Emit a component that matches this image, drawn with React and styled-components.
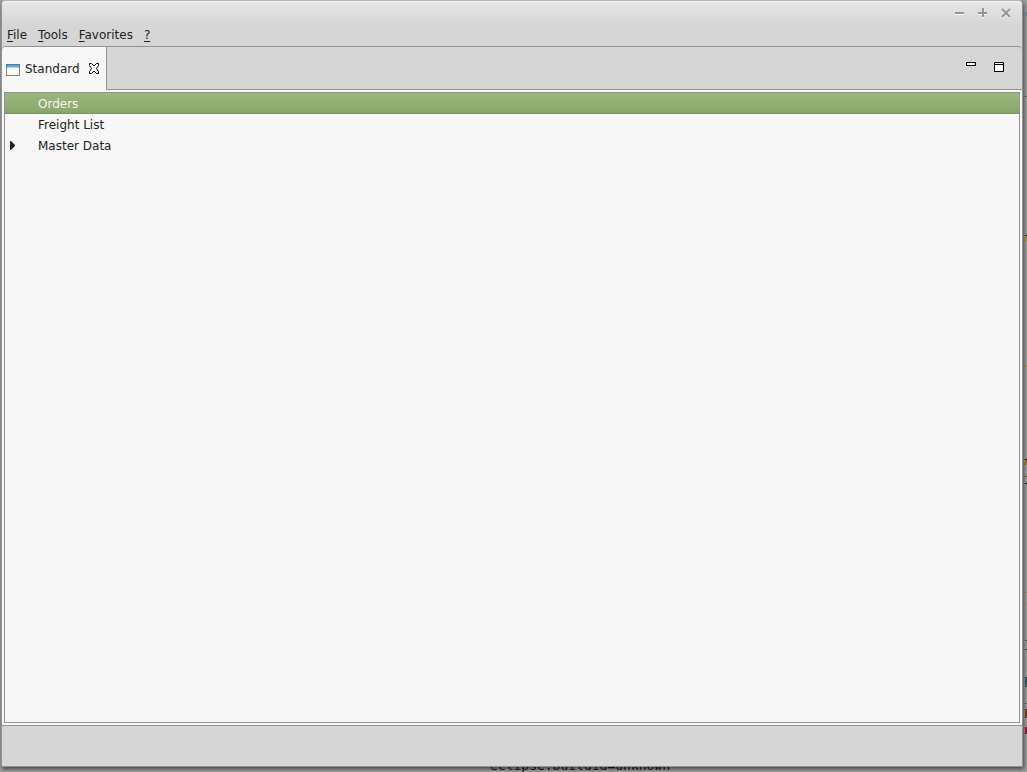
import React, { useState } from "react";
import styled, { createGlobalStyle } from "styled-components";

const MENUS = ["File", "Tools", "Favorites", "?"];

const TREE = [
    { name: "Orders" },
    { name: "Freight List" },
    { name: "Master Data", children: true },
];

// editor marks that stick out behind the right edge of the window
const MARKS = [
    { top: 12, height: 4, color: "#7a8fa5" },
    { top: 96, height: 1, color: "#666" },
    { top: 235, height: 1, color: "#111" },
    { top: 237, height: 5, color: "#a39a55" },
    { top: 365, height: 2, color: "#a58f3c" },
    { top: 459, height: 1, color: "#111" },
    { top: 460, height: 5, color: "#9a7e3a" },
    { top: 476, height: 1, color: "#84591f" },
    { top: 483, height: 1, color: "#111" },
    { top: 592, height: 1, color: "#b07a30" },
    { top: 603, height: 2, color: "#b39a6a" },
    { top: 640, height: 1, color: "#555" },
    { top: 649, height: 1, color: "#444" },
    { top: 677, height: 10, color: "#3d5a66" },
    { top: 703, height: 1, color: "#666" },
    { top: 709, height: 9, color: "#6a4423" },
    { top: 727, height: 7, color: "#a8123f" },
];

const GlobalStyle = createGlobalStyle`
    * {
        box-sizing: border-box;
    }

    body {
        margin: 0;
        background: #a0a0a0;
        font: 12px/20px "DejaVu Sans", sans-serif;
        color: #212121;
    }
`

const Desktop = styled.div`
    position: relative;
    display: flex;
    height: 100vh;
    padding: 0 4px 5px 1px;
    overflow: hidden;
    background: #a0a0a0;
`

const Mark = styled.div`
    position: absolute;
    right: 0;
    top: ${props => props.$top}px;
    width: 2px;
    height: ${props => props.$height}px;
    background: ${props => props.$color};
`

const ConsoleText = styled.div`
    position: absolute;
    left: 490px;
    bottom: -2px;
    font: 13px/16px "DejaVu Sans Mono", monospace;
    color: #111;
`

const Window = styled.div`
    position: relative;
    display: flex;
    flex-direction: column;
    flex: 1;
    border: 1px solid #929292;
    border-top-color: #b4b4b4;
    border-radius: 4px 4px 0 0;
    background: #d6d6d6;
    box-shadow: 1px 2px 4px rgba(0, 0, 0, 0.6);
`

const TitleBar = styled.header`
    display: flex;
    justify-content: flex-end;
    gap: 9px;
    height: 24px;
    padding: 4px 9px 0 0;
    border-top: 1px solid #f4f4f4;
    border-radius: 4px 4px 0 0;
    background: linear-gradient(#e6e6e6, #d6d6d6);
`

const IconButton = styled.button`
    display: flex;
    padding: 0;
    border: 0;
    background: none;
    color: inherit;
`

const TitleButton = styled(IconButton)`
    width: 14px;
    height: 14px;
    color: #959595;
`

const MenuBar = styled.nav`
    display: flex;
    align-items: flex-start;
    gap: 11px;
    height: 21px;
    padding-left: 5px;
`

const MenuButton = styled.button`
    padding: 0;
    border: 0;
    background: none;
    font: inherit;
    color: inherit;
`

const Mnemonic = styled.span`
    text-decoration: underline;
    text-underline-offset: 2px;
`

const TabBar = styled.div`
    display: flex;
    justify-content: space-between;
    height: 44px;
    border-top: 1px solid #929292;
    border-bottom: 1px solid #929292;
    border-radius: 4px 4px 0 0;
`

const Tab = styled.div`
    display: flex;
    align-items: center;
    gap: 5px;
    height: 43px;
    padding: 0 6px 0 4px;
    border-right: 1px solid #929292;
    border-radius: 4px 0 0 0;
    background: #f7f7f7;
`

const TabClose = styled(IconButton)`
    padding-left: 3px;
`

const TabTools = styled.div`
    display: flex;
    align-items: flex-start;
    gap: 18px;
    padding: 15px 18px 0 0;
`

const Part = styled.main`
    display: flex;
    flex: 1;
    padding: 2px;
    border-bottom: 1px solid #929292;
    background: #f7f7f7;
`

const Tree = styled.ul`
    flex: 1;
    margin: 0;
    padding: 0;
    border: 1px solid #929292;
    list-style: none;
`

const TreeItem = styled.li`
    display: flex;
    align-items: center;
    height: 21px;
    padding: 1px 0 0 5px;
    background: ${props => props.$selected ? "linear-gradient(#9ab87c, #87a667)" : "none"};
    box-shadow: ${props => props.$selected ? "inset 0 -1px #7a9160" : "none"};
    color: ${props => props.$selected ? "#f5f5f5" : "inherit"};
    cursor: default;
`

const Expander = styled.span`
    display: flex;
    width: 28px;
`

const StatusBar = styled.footer`
    height: 40px;
`

const Menu = ({ name }) => (
    <MenuButton type="button"><Mnemonic>{name[0]}</Mnemonic>{name.slice(1)}</MenuButton>
);

const TitleIcon = ({ d }) => (
    <svg width="14" height="14" viewBox="0 0 14 14" fill="none" strokeWidth="2">
        <path d={d} stroke="#f8f8f8" transform="translate(0 1)" />
        <path d={d} stroke="currentColor" />
    </svg>
);

const WindowIcon = () => (
    <svg width="14" height="14" viewBox="0 -2 14 14" shapeRendering="crispEdges">
        <rect width="14" height="12" fill="#8c8157" />
        <rect x="1" y="3" width="12" height="8" fill="#f2fbff" />
        <rect width="14" height="3" fill="#3f7db8" />
        <rect x="1" y="1" width="12" height="2" fill="#62a5de" />
        <rect x="1" y="3" width="12" height="1" fill="#b6d5f2" />
    </svg>
);

const CloseIcon = () => (
    <svg width="12" height="12" viewBox="0 0 12 12" fill="#fff" stroke="#000">
        <path d="M1.5 0.5h2l2.5 2.5 2.5-2.5h2v2l-2 3 2 3v2h-2l-2.5-2.5-2.5 2.5h-2v-2l2-3-2-3z" />
    </svg>
);

export default function App() {
    const [selected, setSelected] = useState("Orders");

    return (
        <Desktop>
            <GlobalStyle />
            {MARKS.map(mark => (
                <Mark key={mark.top} $top={mark.top} $height={mark.height} $color={mark.color} />
            ))}
            <ConsoleText>eclipse.buildid=unknown</ConsoleText>
            <Window>
                <TitleBar>
                    <TitleButton type="button" aria-label="Minimize window"><TitleIcon d="M2 7h9" /></TitleButton>
                    <TitleButton type="button" aria-label="Maximize window"><TitleIcon d="M2 7h9M7 2v9" /></TitleButton>
                    <TitleButton type="button" aria-label="Close window"><TitleIcon d="M3 3l8 8M11 3l-8 8" /></TitleButton>
                </TitleBar>
                <MenuBar>
                    {MENUS.map(name => <Menu key={name} name={name} />)}
                </MenuBar>
                <TabBar>
                    <Tab>
                        <WindowIcon />
                        <span>Standard</span>
                        <TabClose type="button" aria-label="Close tab"><CloseIcon /></TabClose>
                    </Tab>
                    <TabTools>
                        <IconButton type="button" aria-label="Minimize">
                            <svg width="10" height="4" viewBox="0 0 10 4">
                                <rect x="0.5" y="0.5" width="9" height="3" fill="#fff" stroke="#000" />
                            </svg>
                        </IconButton>
                        <IconButton type="button" aria-label="Maximize">
                            <svg width="10" height="10" viewBox="0 0 10 10">
                                <path d="M0.5 0.5h9v9h-9zM1 2.5h8" fill="#fff" stroke="#000" />
                            </svg>
                        </IconButton>
                    </TabTools>
                </TabBar>
                <Part>
                    <Tree role="tree">
                        {TREE.map(({ name, children }) => (
                            <TreeItem key={name} role="treeitem" aria-selected={name === selected}
                                $selected={name === selected} onClick={() => setSelected(name)}>
                                <Expander>
                                    {children
                                        ? <svg width="6" height="10" viewBox="0 0 6 10"><path d="M0 0h1l4 4v1l-4 4h-1z" fill="#212121" /></svg>
                                        : null
                                    }
                                </Expander>
                                {name}
                            </TreeItem>
                        ))}
                    </Tree>
                </Part>
                <StatusBar />
            </Window>
        </Desktop>
    );
}
